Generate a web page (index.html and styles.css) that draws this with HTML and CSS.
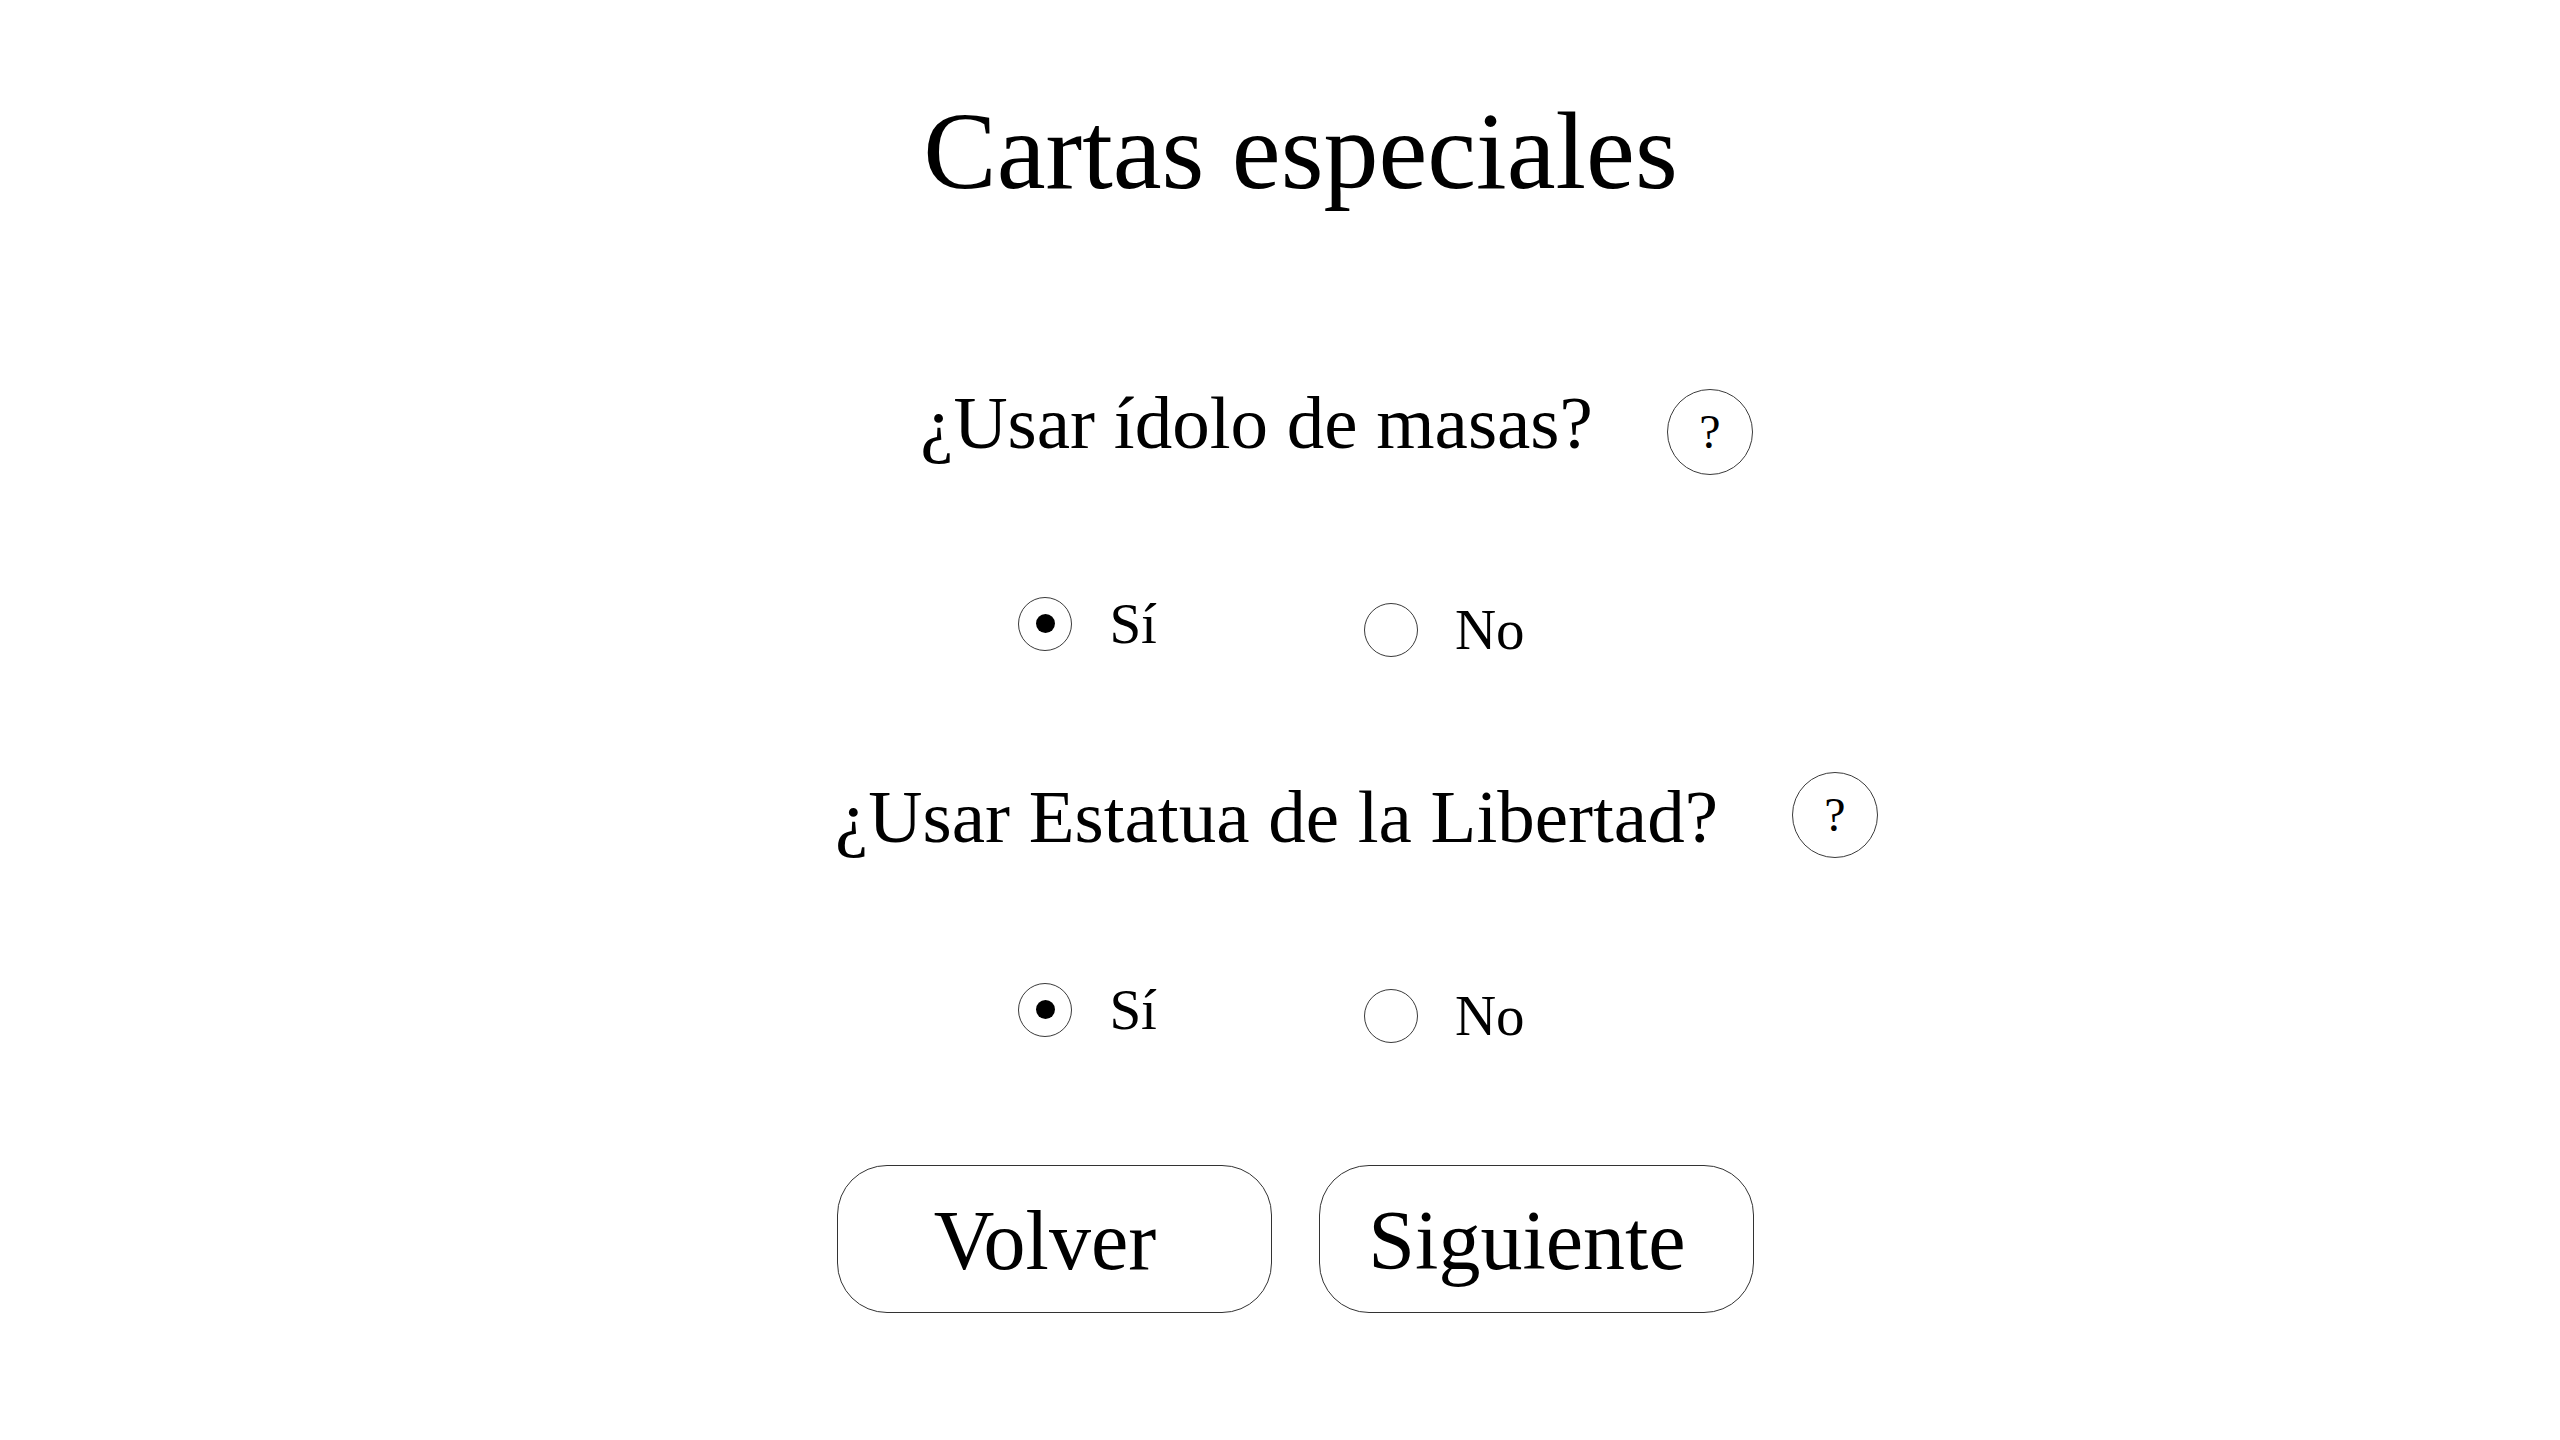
FILE: index.html
```html
<!DOCTYPE html>
<html lang="es">
<head>
<meta charset="utf-8">
<title>Cartas especiales</title>
<link rel="stylesheet" href="styles.css">
</head>
<body>
<main class="page">
  <h1 class="title">Cartas especiales</h1>

  <div class="question question--first">
    <span class="question-text">¿Usar ídolo de masas?</span>
    <button class="help help--low" type="button">?</button>
  </div>
  <div class="choices choices--first">
    <label class="option"><input class="radio" type="radio" name="idolo" checked><span class="option-text">Sí</span></label>
    <label class="option option--no"><input class="radio" type="radio" name="idolo"><span class="option-text">No</span></label>
  </div>

  <div class="question question--second">
    <span class="question-text">¿Usar Estatua de la Libertad?</span>
    <button class="help" type="button">?</button>
  </div>
  <div class="choices choices--second">
    <label class="option"><input class="radio" type="radio" name="estatua" checked><span class="option-text">Sí</span></label>
    <label class="option option--no"><input class="radio" type="radio" name="estatua"><span class="option-text">No</span></label>
  </div>

  <div class="actions">
    <button class="action" type="button">Volver</button>
    <button class="action" type="button">Siguiente</button>
  </div>
</main>
</body>
</html>
```
FILE: styles.css
```css
html, body {
  margin: 0;
  padding: 0;
  background: #ffffff;
}

body {
  font-family: "Liberation Serif", "Times New Roman", serif;
  color: #000000;
}

.page {
  display: flex;
  flex-direction: column;
  align-items: stretch;
}

.title {
  margin: 87px 0 0 0;
  padding-left: 41px;
  font-size: 110px;
  line-height: 128px;
  font-weight: normal;
  text-align: center;
}

.question {
  display: flex;
  justify-content: center;
  align-items: flex-start;
  gap: 74px;
  height: 90px;
}

.question--first {
  margin-top: 163px;
  padding-left: 113px;
}

.question--second {
  margin-top: 114px;
  padding-left: 153px;
}

.question-text {
  font-size: 75px;
  line-height: 90px;
  white-space: nowrap;
}

.help {
  flex: none;
  width: 86px;
  height: 86px;
  margin: 0;
  padding: 0;
  border: 1px solid #3a3a3a;
  border-radius: 50%;
  background: #ffffff;
  font-family: "Liberation Serif", "Times New Roman", serif;
  font-size: 48px;
  line-height: 1;
  color: #000000;
  display: flex;
  align-items: center;
  justify-content: center;
}

.help--low {
  margin-top: 11px;
}

.choices {
  display: flex;
  justify-content: center;
  align-items: flex-start;
  gap: 207px;
  padding-right: 17px;
}

.choices--first {
  margin-top: 127px;
}

.choices--second {
  margin-top: 119px;
}

.option {
  display: flex;
  align-items: center;
  gap: 37px;
}

.option--no {
  margin-top: 6px;
}

.option-text {
  font-size: 57px;
  line-height: 57px;
}

.radio {
  appearance: none;
  -webkit-appearance: none;
  margin: 0;
  flex: none;
  width: 54px;
  height: 54px;
  border: 1px solid #3a3a3a;
  border-radius: 50%;
  background: #ffffff;
  display: flex;
  align-items: center;
  justify-content: center;
}

.radio:checked::before {
  content: "";
  width: 19px;
  height: 19px;
  border-radius: 50%;
  background: #000000;
}

.actions {
  margin-top: 121px;
  display: flex;
  justify-content: center;
  gap: 47px;
  padding-left: 30px;
}

.action {
  box-sizing: border-box;
  width: 435px;
  height: 148px;
  margin: 0;
  padding: 4px 18px 0 0;
  border: 1px solid #333333;
  border-radius: 50px;
  background: #ffffff;
  font-family: "Liberation Serif", "Times New Roman", serif;
  font-size: 84px;
  line-height: 84px;
  color: #000000;
  display: flex;
  align-items: center;
  justify-content: center;
}
```
